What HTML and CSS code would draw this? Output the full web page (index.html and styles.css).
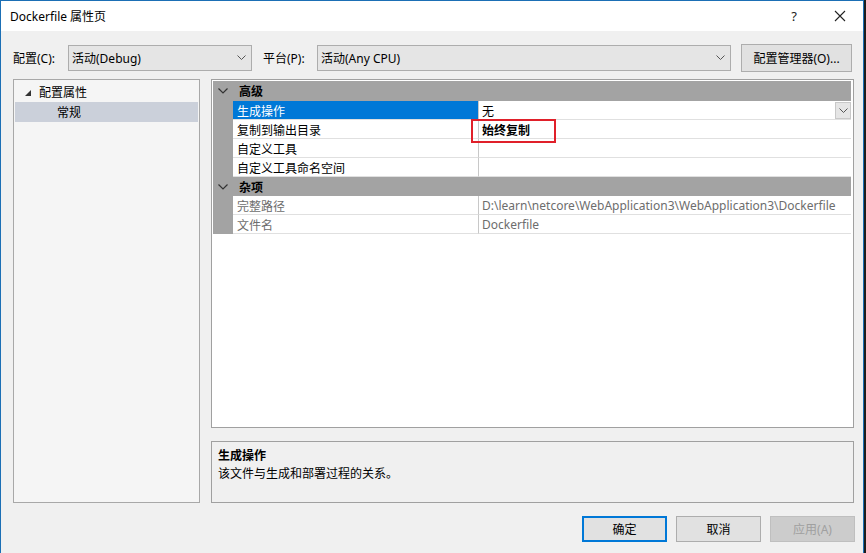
FILE: index.html
```html
<!DOCTYPE html>
<html>
<head>
<meta charset="utf-8">
<link rel="stylesheet" href="styles.css">
</head>
<body>
<div class="window">
  <div class="titlebar">
    <span class="title">Dockerfile 属性页</span>
    <span class="tb-help">?</span>
    <span class="tb-close"><svg width="12" height="12" viewBox="0 0 12 12"><path d="M1 1L11 11M11 1L1 11" stroke="#222" stroke-width="1.1" fill="none"/></svg></span>
  </div>
  <div class="content">
    <div class="toprow">
      <span class="lbl">配置(C):</span>
      <div class="combo combo-config"><span>活动(Debug)</span><svg class="chev" width="9" height="6" viewBox="0 0 9 6"><path d="M0.5 0.5L4.5 4.5L8.5 0.5" stroke="#555" fill="none"/></svg></div>
      <span class="lbl lbl-plat">平台(P):</span>
      <div class="combo combo-plat"><span>活动(Any CPU)</span><svg class="chev" width="9" height="6" viewBox="0 0 9 6"><path d="M0.5 0.5L4.5 4.5L8.5 0.5" stroke="#555" fill="none"/></svg></div>
      <div class="btn btn-mgr">配置管理器(O)...</div>
    </div>
    <div class="main">
      <div class="tree">
        <div class="tree-item root"><svg class="tri" width="6" height="6" viewBox="0 0 6 6"><path d="M6 0V6H0Z" fill="#333"/></svg><span>配置属性</span></div>
        <div class="tree-item child sel">常规</div>
      </div>
      <div class="right">
        <div class="grid">
          <div class="cat"><svg class="cat-chev" width="10" height="6" viewBox="0 0 10 6"><path d="M0.5 0.5L5 5L9.5 0.5" stroke="#333" fill="none" stroke-width="1.2"/></svg><span>高级</span></div>
          <div class="row">
            <div class="gut"></div>
            <div class="name selname">生成操作</div>
            <div class="val">无<span class="ddbtn"><svg width="9" height="6" viewBox="0 0 9 6"><path d="M0.5 0.5L4.5 4.5L8.5 0.5" stroke="#555" fill="none"/></svg></span></div>
          </div>
          <div class="row">
            <div class="gut"></div>
            <div class="name">复制到输出目录</div>
            <div class="val bold">始终复制</div>
          </div>
          <div class="row">
            <div class="gut"></div>
            <div class="name">自定义工具</div>
            <div class="val"></div>
          </div>
          <div class="row">
            <div class="gut"></div>
            <div class="name">自定义工具命名空间</div>
            <div class="val"></div>
          </div>
          <div class="cat cat2"><svg class="cat-chev" width="10" height="6" viewBox="0 0 10 6"><path d="M0.5 0.5L5 5L9.5 0.5" stroke="#333" fill="none" stroke-width="1.2"/></svg><span>杂项</span></div>
          <div class="row dis">
            <div class="gut"></div>
            <div class="name">完整路径</div>
            <div class="val">D:\learn\netcore\WebApplication3\WebApplication3\Dockerfile</div>
          </div>
          <div class="row dis">
            <div class="gut"></div>
            <div class="name">文件名</div>
            <div class="val">Dockerfile</div>
          </div>
          <div class="redbox"></div>
        </div>
        <div class="desc">
          <div class="desc-title">生成操作</div>
          <div class="desc-text">该文件与生成和部署过程的关系。</div>
        </div>
      </div>
    </div>
    <div class="buttons">
      <div class="btn btn-ok">确定</div>
      <div class="btn btn-dlg">取消</div>
      <div class="btn btn-dlg disabled">应用(A)</div>
    </div>
  </div>
</div>
</body>
</html>
```

FILE: styles.css
```css
* { box-sizing: border-box; }
html, body { margin: 0; padding: 0; }
body {
  background: #1c1c1c;
  width: 866px;
  height: 553px;
  overflow: hidden;
  font-family: "Noto Sans", "Noto Sans CJK SC", sans-serif;
  font-size: 12px;
  color: #000;
}
.window {
  width: 864px;
  height: 553px;
  border: 1px solid #1b6fb5;
  border-bottom: none;
  background: #f0f0f0;
  display: flex;
  flex-direction: column;
}
.titlebar {
  height: 30px;
  background: #fff;
  display: flex;
  align-items: center;
  padding-left: 9px;
  flex: none;
}
.title { font-size: 12px; color: #000; flex: 1; }
.tb-help { width: 46px; text-align: center; font-size: 13px; color: #222; }
.tb-close { width: 46px; display: flex; justify-content: center; align-items: center; }
.content {
  flex: 1;
  padding: 13px 9px 0 12px;
  display: flex;
  flex-direction: column;
}
.toprow {
  display: flex;
  align-items: center;
  height: 27px;
}
.lbl { width: 55px; }
.lbl-plat { margin-left: 11px; width: 54px; }
.combo {
  height: 26px;
  border: 1px solid #adadad;
  background: #e5e5e5;
  display: flex;
  align-items: center;
  padding-left: 3px;
  padding-right: 5px;
  justify-content: space-between;
}
.combo-config { width: 184px; }
.combo-plat { width: 414px; }
.btn {
  border: 1px solid #adadad;
  background: #e1e1e1;
  display: flex;
  align-items: center;
  justify-content: center;
}
.btn-mgr { margin-left: 10px; width: 111px; height: 28px; }
.main {
  display: flex;
  margin-top: 8px;
  height: 424px;
}
.tree {
  width: 187px;
  border: 1px solid #a8a8a8;
  background: #f5f5f5;
  padding: 2px 1px;
}
.tree-item { height: 20px; display: flex; align-items: center; }
.root { padding-left: 10px; }
.tri { margin-right: 8px; margin-top: 2px; }
.child { padding-left: 42px; }
.sel { background: #cbd0da; }
.right {
  margin-left: 11px;
  width: 643px;
  display: flex;
  flex-direction: column;
}
.grid {
  position: relative;
  height: 349px;
  border: 1px solid #a0a0a0;
  background: #fff;
  padding: 1px 2px 0 1px;
}
.cat {
  height: 20px;
  padding-bottom: 1px;
  background: #a3a3a3;
  display: flex;
  align-items: center;
  font-weight: bold;
}
.cat2 { height: 19px; padding-bottom: 0; }
.cat-chev { margin-left: 5px; margin-right: 11px; }
.row {
  display: flex;
  height: 19px;
}
.gut { width: 20px; background: #a3a3a3; flex: none; }
.name {
  width: 246px;
  flex: none;
  border-bottom: 1px solid #e0e0e0;
  border-right: 1px solid #c8c8c8;
  padding-left: 4px;
  padding-top: 1px;
  display: flex;
  align-items: center;
}
.selname { background: #0078d7; color: #fff; }
.val {
  flex: 1;
  border-bottom: 1px solid #e0e0e0;
  padding-left: 3px;
  padding-top: 1px;
  display: flex;
  align-items: center;
  position: relative;
  white-space: nowrap;
  overflow: hidden;
}
.bold { font-weight: bold; }
.dis .name, .dis .val { color: #6d6d6d; }
.ddbtn {
  position: absolute;
  right: 0;
  top: 1px;
  width: 16px;
  height: 17px;
  background: #e5e5e5;
  border: 1px solid #c8c8c8;
  display: flex;
  align-items: center;
  justify-content: center;
}
.redbox {
  position: absolute;
  left: 259px;
  top: 39px;
  width: 85px;
  height: 24px;
  border: 2px solid #e0202a;
}
.desc {
  margin-top: 13px;
  height: 62px;
  border: 1px solid #a0a0a0;
  background: #f0f0f0;
  padding: 5px 6px;
}
.desc-title { font-weight: bold; line-height: 18px; }
.desc-text { line-height: 18px; }
.buttons {
  display: flex;
  justify-content: flex-end;
  margin-top: 13px;
  margin-right: -1px;
  gap: 9px;
}
.buttons .btn { width: 85px; height: 26px; }
.btn-ok { border: 2px solid #0078d7; }
.disabled { color: #a0a0a0; background: #cccccc; border-color: #bfbfbf; }
```
